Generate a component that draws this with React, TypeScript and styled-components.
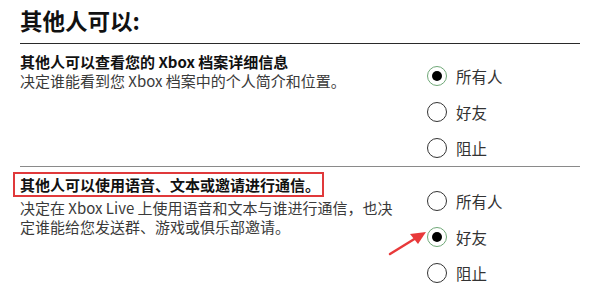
import React from "react";
import styled, { createGlobalStyle } from "styled-components";

const Global = createGlobalStyle`
  html, body { margin: 0; padding: 0; background: #fff; }
  body { font-family: "Noto Sans CJK SC", "Noto Sans", sans-serif; color: #222; }
`;

const Page = styled.div`
  position: relative;
  width: 600px;
  height: 287px;
  overflow: hidden;
  padding: 0 20px;
  box-sizing: border-box;
`;

const Title = styled.h1`
  margin: 0;
  padding-top: 5px;
  height: 43px;
  font-size: 22.5px;
  font-weight: 700;
  line-height: 30px;
  color: #111;
  box-sizing: border-box;
`;

const Section = styled.section<{ $line: string }>`
  display: grid;
  grid-template-columns: 407px 1fr;
  border-top: 1.5px solid ${(p) => p.$line};
`;

const TextCol = styled.div<{ $pt: number }>`
  padding-top: ${(p) => p.$pt}px;
`;

const Heading = styled.div`
  font-size: 15px;
  font-weight: 700;
  line-height: 19px;
  color: #111;
`;

const Boxed = styled.div`
  width: fit-content;
  margin: 0 0 1px -7px;
  padding: 1px 2px 1px 5px;
  border: 2px solid #e0393b;
  font-size: 15px;
  font-weight: 700;
  line-height: 19px;
  color: #111;
`;

const Desc = styled.div<{ $w?: number }>`
  font-size: 15px;
  line-height: 19px;
  color: #3a3a3a;
  width: ${(p) => (p.$w ? `${p.$w}px` : "auto")};
`;

const RadioCol = styled.div<{ $pt: number }>`
  display: flex;
  flex-direction: column;
  padding-top: ${(p) => p.$pt}px;
`;

const RadioItem = styled.div`
  display: flex;
  align-items: center;
  height: 36px;
  gap: 9px;
`;

const Circle = styled.span<{ $on?: boolean }>`
  width: 20px;
  height: 20px;
  border-radius: 50%;
  box-sizing: border-box;
  border: 1.5px solid ${(p) => (p.$on ? "#6fa877" : "#333")};
  display: flex;
  align-items: center;
  justify-content: center;
  &::after {
    content: "";
    display: ${(p) => (p.$on ? "block" : "none")};
    width: 10px;
    height: 10px;
    border-radius: 50%;
    background: #000;
  }
`;

const Label = styled.span`
  font-size: 15.5px;
  color: #333;
`;

const Arrow = styled.svg`
  position: absolute;
  left: 386px;
  top: 228px;
`;

const Radio = ({ label, on }: { label: string; on?: boolean }) => (
  <RadioItem>
    <Circle $on={on} />
    <Label>{label}</Label>
  </RadioItem>
);

export default function App() {
  return (
    <>
      <Global />
      <Page>
        <Title>其他人可以:</Title>
        <Section $line="#2a2a2a">
          <TextCol $pt={8}>
            <Heading>其他人可以查看您的 Xbox 档案详细信息</Heading>
            <Desc>决定谁能看到您 Xbox 档案中的个人简介和位置。</Desc>
          </TextCol>
          <RadioCol $pt={14}>
            <Radio label="所有人" on />
            <Radio label="好友" />
            <Radio label="阻止" />
          </RadioCol>
        </Section>
        <Section $line="#8a8a8a">
          <TextCol $pt={5}>
            <Boxed>其他人可以使用语音、文本或邀请进行通信。</Boxed>
            <Desc $w={385}>决定在 Xbox Live 上使用语音和文本与谁进行通信，也决定谁能给您发送群、游戏或俱乐部邀请。</Desc>
          </TextCol>
          <RadioCol $pt={16}>
            <Radio label="所有人" />
            <Radio label="好友" on />
            <Radio label="阻止" />
          </RadioCol>
        </Section>
        <Arrow width="44" height="30" viewBox="0 0 44 30">
          <path d="M4 26 L30 10" stroke="#e8393a" strokeWidth="2.5" strokeLinecap="round" />
          <polygon points="40,4 24,6 32,16" fill="#e8393a" />
        </Arrow>
      </Page>
    </>
  );
}
